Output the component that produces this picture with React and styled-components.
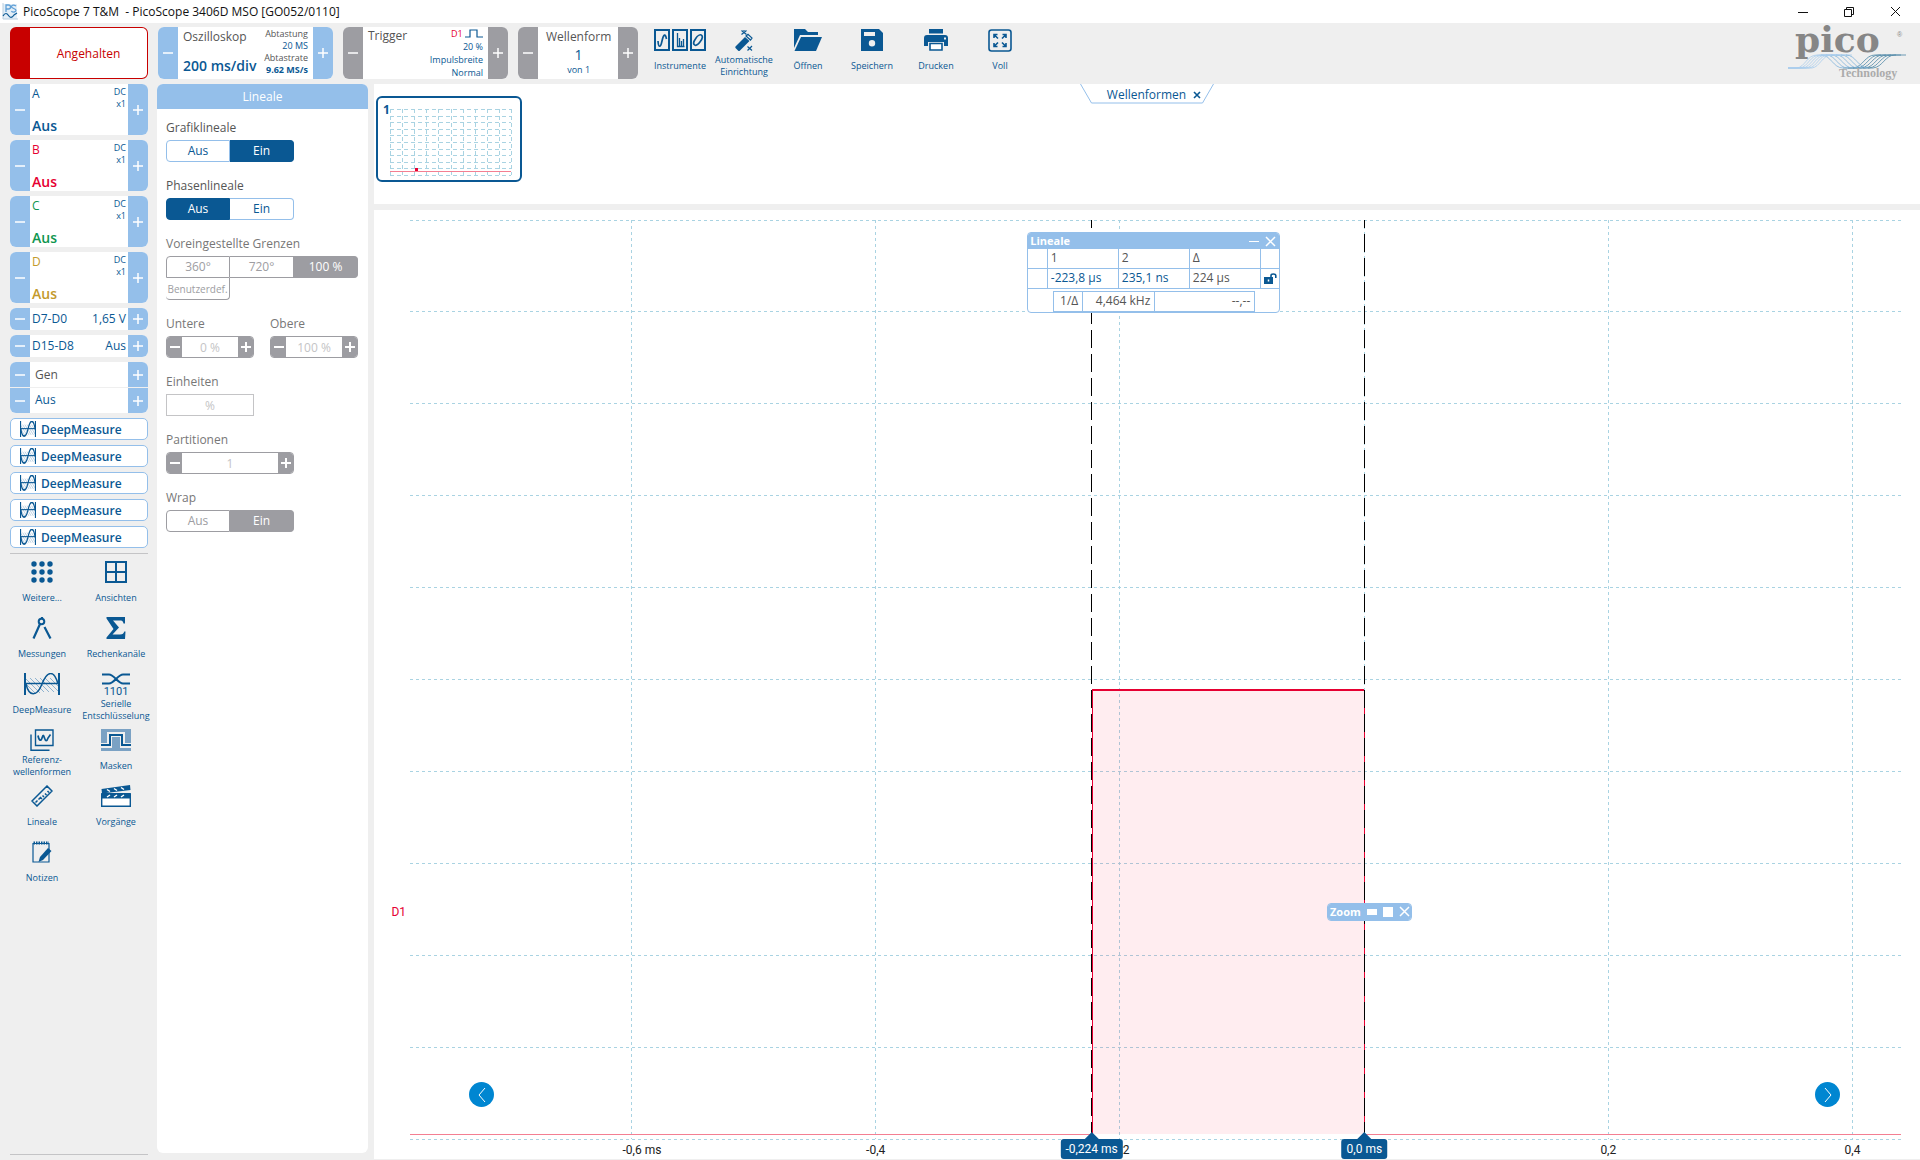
import React from "react";
import styled, { createGlobalStyle, css } from "styled-components";

const c = {
  navy: "#0a5893",
  sky: "#94bfea",
  grey: "#9d9da2",
  bg: "#efefef",
  text: "#555555",
  red: "#c80000",
  trace: "#e60032",
  grid: "#a9d3e2",
};

const Global = createGlobalStyle`
  *, *::before, *::after { box-sizing: border-box; }
  body { margin: 0; background: ${c.bg}; }
  body, button, input { font-family: "Open Sans", "Noto Sans", sans-serif; font-size: 12px; }
  button { padding: 0; border: 0; background: none; color: inherit; cursor: pointer; }
  svg { display: block; flex: none; }
`;

/* ---------- frame ---------- */

const Page = styled.div`
  display: flex;
  flex-direction: column;
  height: 100vh;
  color: ${c.navy};
`;

const TitleBar = styled.header`
  display: flex;
  align-items: center;
  height: 23px;
  flex: none;
  padding: 0 2px;
  background: #fff;
  color: #111;
`;

const Title = styled.h1`
  flex: 1;
  margin: 0 0 0 5px;
  font-size: 12px;
  font-weight: 400;
  line-height: 20px;
  white-space: pre;
`;

const WindowButton = styled.button`
  display: grid;
  place-items: center;
  width: 46px;
  height: 20px;
`;

const Toolbar = styled.div`
  display: flex;
  align-items: flex-start;
  gap: 10px;
  flex: none;
  height: 61px;
  padding: 4px 12px 0 10px;
`;

const Body = styled.main`
  display: flex;
  flex: 1;
  min-height: 0;
`;

/* ---------- stepper cards ---------- */

const Card = styled.div`
  display: flex;
  width: ${(p) => p.$w || "auto"};
  height: ${(p) => p.$h}px;
  flex: none;
  overflow: hidden;
  border-radius: 6px;
  background: #fff;
`;

const Step = styled.button`
  display: grid;
  place-items: center;
  width: 20px;
  flex: none;
  background: ${(p) => (p.$grey ? c.grey : c.sky)};
`;

const CardBody = styled.div`
  display: flex;
  flex: 1;
  justify-content: space-between;
  min-width: 0;
  padding: ${(p) => p.$pad || "0 2px"};
  white-space: nowrap;
`;

const Stack = styled.div`
  display: flex;
  flex-direction: column;
  justify-content: ${(p) => p.$justify || "flex-start"};
  align-items: ${(p) => p.$align || "flex-start"};
`;

const Caption = styled.span`
  color: ${(p) => p.$color || c.text};
  font-size: ${(p) => (p.$big ? 14 : 12)}px;
  line-height: 18px;
`;

const Strong = styled.span`
  color: ${(p) => p.$color || c.navy};
  font-size: 14px;
  font-weight: 600;
  line-height: 18px;
`;

const Small = styled.span`
  display: flex;
  align-items: center;
  color: ${(p) => p.$color || c.navy};
  font-size: 9px;
  font-weight: ${(p) => (p.$bold ? 700 : 400)};
  line-height: ${(p) => p.$lh || 12}px;
`;

const StopButton = styled.button`
  width: 138px;
  height: 52px;
  flex: none;
  border: 1px solid ${c.red};
  border-left-width: 20px;
  border-radius: 6px;
  background: #fff;
  color: ${c.red};
  font-size: 12px;
`;

/* ---------- tools ---------- */

const Tools = styled.nav`
  display: flex;
  flex: 1;
`;

const ToolButton = styled.button`
  display: flex;
  flex-direction: column;
  align-items: center;
  gap: 2px;
  width: ${(p) => p.$w}px;
  padding-top: 2px;
  color: ${c.navy};
`;

const ToolIcon = styled.span`
  display: grid;
  place-items: start center;
  height: 23px;
`;

const ToolLabel = styled.span`
  display: flex;
  flex-direction: column;
  justify-content: center;
  height: 24px;
  font-size: 9px;
  line-height: 12px;
  white-space: nowrap;
`;

const Sidebar = styled.aside`
  display: flex;
  flex-direction: column;
  gap: 5px;
  width: 157px;
  flex: none;
  padding-bottom: 5px;
`;

const Channels = styled.div`
  display: flex;
  flex-direction: column;
  gap: 5px;
  padding: 0 9px 0 10px;
`;

const Rule = styled.hr`
  width: 138px;
  margin: ${(p) => (p.$bottom ? "auto 0 0 10px" : "0 0 0 10px")};
  border: 0;
  border-top: 1px solid #c4c4c6;
`;

const GenCard = styled.div`
  display: flex;
  flex-direction: column;
  gap: 1px;
  height: 51px;
`;

const GenHalf = styled(Card)`
  flex: 1;
  height: auto;
  border-radius: ${(p) => (p.$top ? "6px 6px 0 0" : "0 0 6px 6px")};
`;

const DeepButton = styled.button`
  display: flex;
  align-items: center;
  gap: 5px;
  height: 22px;
  padding-left: 9px;
  border: 1px solid ${c.sky};
  border-radius: 5px;
  background: #fff;
  font-size: 12px;
  font-weight: 600;
`;

const ToolGrid = styled.nav`
  display: grid;
  grid-template-columns: 74px 74px;
  grid-auto-rows: 56px;
  padding-left: 5px;
`;

/* ---------- ruler settings ---------- */

const Panel = styled.section`
  display: flex;
  flex-direction: column;
  width: 211px;
  flex: none;
  margin: 0 6px 7px 0;
  overflow: hidden;
  border-radius: 6px;
  background: #fff;
`;

const PanelTitle = styled.h2`
  margin: 0;
  background: ${c.sky};
  color: #fff;
  font-size: 12px;
  font-weight: 400;
  line-height: 25px;
  text-align: center;
`;

const Fields = styled.div`
  display: flex;
  flex-direction: column;
  gap: 13px;
  padding: 8px 10px 0 9px;
`;

const Pair = styled.div`
  display: flex;
  gap: 16px;
`;

const Field = styled.div`
  display: flex;
  flex-direction: column;
  gap: 1px;
  color: ${(p) => (p.$off ? "#777777" : c.text)};
  font-size: 12px;
  line-height: 22px;
`;

const Segments = styled.div`
  display: flex;
  flex-wrap: wrap;
`;

const Segment = styled.button`
  width: 64px;
  height: 22px;
  border: 1px solid ${(p) => (p.$off ? c.grey : c.sky)};
  border-radius: ${(p) => p.$radius || "0"};
  background: ${(p) => (p.$on ? (p.$off ? c.grey : c.navy) : "#fff")};
  color: ${(p) => (p.$on ? "#fff" : p.$off ? c.grey : c.navy)};
  font-size: ${(p) => (p.$narrow ? 10 : 12)}px;
  line-height: 20px;
  white-space: nowrap;
  ${(p) => p.$on && !p.$off && css`border-color: ${c.navy};`}
  & + & { border-left-width: ${(p) => (p.$narrow ? 1 : 0)}px; }
  ${(p) => p.$narrow && css`border-top-width: 0;`}
`;

const Spinner = styled.div`
  display: flex;
  width: ${(p) => p.$w}px;
  height: 22px;
  overflow: hidden;
  border: 1px solid ${c.grey};
  border-radius: 4px;
`;

const SpinStep = styled(Step)`
  width: 15px;
`;

const SpinInput = styled.input`
  flex: 1;
  width: 0;
  padding: 0;
  border: 0;
  background: #fff;
  color: #c4c4c6;
  font-size: 12px;
  text-align: center;
`;

const UnitInput = styled.input`
  width: 88px;
  height: 22px;
  padding: 0;
  border: 1px solid #c4c4c6;
  background: #fff;
  color: #c4c4c6;
  text-align: center;
`;

/* ---------- waveform area ---------- */

const Views = styled.div`
  display: flex;
  flex: 1;
  flex-direction: column;
  gap: 6px;
  min-width: 0;
  padding-bottom: 1px;
`;

const Buffer = styled.section`
  display: grid;
  grid-template-columns: 1fr auto 1fr;
  align-items: start;
  height: 120px;
  flex: none;
  background: #fff;
`;

const Thumb = styled.button`
  display: flex;
  width: 146px;
  height: 86px;
  margin: 12px 0 0 2px;
  padding: 4px 0 0 5px;
  border: 2px solid ${c.navy};
  border-radius: 6px;
  color: ${c.navy};
  font-size: 12px;
  font-weight: 700;
  line-height: 16px;
`;

const ThumbPlot = styled.svg`
  margin: 7px 0 0;
`;

const TabShape = styled.svg`
  grid-area: 1 / 1;
`;

const Tab = styled.div`
  display: grid;
  width: 134px;
  height: 20px;
`;

const TabText = styled.div`
  display: flex;
  grid-area: 1 / 1;
  align-items: center;
  justify-content: center;
  gap: 7px;
  padding: 1px 0 0 14px;
  font-size: 12px;
  line-height: 20px;
`;

const Graph = styled.section`
  display: grid;
  position: relative;
  flex: 1;
  min-height: 0;
  padding: 10px 19px 20px 36px;
  background: #fff;
`;

const Plot = styled.div`
  position: relative;
  min-height: 0;
`;

const PlotSvg = styled.svg`
  position: absolute;
  width: 100%;
  height: 100%;
  overflow: visible;
  shape-rendering: crispEdges;
`;

const Tick = styled.text`
  fill: ${(p) => p.$color || "#222222"};
  font-family: Roboto, sans-serif;
  font-size: 12px;
  text-anchor: ${(p) => p.$anchor || "middle"};
`;

const Flag = styled.div`
  position: absolute;
  top: 100%;
  left: ${(p) => p.$left};
  transform: translateX(-50%);
  padding: 0 5px;
  border-radius: 3px;
  background: ${c.navy};
  color: #fff;
  font-family: Roboto, sans-serif;
  font-size: 12px;
  line-height: 20px;
  white-space: nowrap;
  &::before {
    content: "";
    position: absolute;
    bottom: 100%;
    left: 50%;
    margin-left: -7px;
    border: 7px solid transparent;
    border-top-width: 0;
    border-bottom-color: ${c.navy};
  }
`;

const PageButton = styled.button`
  display: grid;
  place-items: center;
  position: absolute;
  bottom: 52px;
  ${(p) => (p.$right ? "right: 80px;" : "left: 95px;")}
  width: 25px;
  height: 25px;
  border-radius: 50%;
  background: #0086d1;
`;

const Floating = styled.div`
  position: absolute;
  top: ${(p) => p.$top};
  left: ${(p) => p.$left};
  width: ${(p) => p.$w}px;
  overflow: hidden;
  border: 1px solid ${c.sky};
  border-radius: 4px;
  background: #fff;
`;

const FloatBar = styled.div`
  display: flex;
  align-items: center;
  gap: ${(p) => p.$gap}px;
  height: 16px;
  padding: 0 3px 0 2px;
  background: ${c.sky};
  color: #fff;
  font-size: 11px;
  font-weight: 700;
  line-height: 16px;
`;

const FloatTitle = styled.span`
  flex: 1;
`;

const RulerTable = styled.table`
  width: ${(p) => p.$w}px;
  margin: ${(p) => p.$margin || "0"};
  border-collapse: collapse;
  table-layout: fixed;
  color: ${c.text};
  font-size: 12px;
`;

const Cell = styled.td`
  width: ${(p) => p.$w}px;
  height: ${(p) => p.$h}px;
  padding: 0 ${(p) => (p.$end ? 4 : 3)}px;
  border: 1px solid ${c.sky};
  ${(p) => p.$open && css`border-top: 0;`}
  ${(p) => p.$first && css`border-left: 0;`}
  ${(p) => p.$last && css`border-right: 0;`}
  color: ${(p) => (p.$blue ? c.navy : c.text)};
  line-height: 16px;
  text-align: ${(p) => (p.$end ? "right" : "left")};
  white-space: nowrap;
`;

/* ---------- icons ---------- */

const Svg = ({ w, h, children, ...rest }) => (
  <svg width={w} height={h} viewBox={`0 0 ${w} ${h}`} fill="none" stroke="currentColor" aria-hidden="true" {...rest}>
    {children}
  </svg>
);

const Sign = ({ plus, thick }) => (
  <Svg w={10} h={10} stroke="#fff" strokeWidth={thick ? 2 : 1.5}>
    <path d={plus ? "M0 5H10M5 0V10" : "M0 5H10"} />
  </Svg>
);

const Cross = ({ size = 10, width = 1 }) => (
  <Svg w={size} h={size} strokeWidth={width}>
    <path d={`M1 1L${size - 1} ${size - 1}M${size - 1} 1L1 ${size - 1}`} />
  </Svg>
);

const AppIcon = () => (
  <Svg w={16} h={17}>
    <rect x="1" y="1" width="14" height="15" fill="#e3eef7" stroke="none" />
    <path d="M1 0V16H16" stroke="#b9cfe0" />
    <path d="M4 9V2H6.500A2 2 0 0 1 6.500 6H4M14 3C12 1.500 9.500 2 9.500 3.800S14 5.400 14 7.300S11 9.600 9.300 8.200" stroke="#5f9fd6" strokeWidth="1.300" />
    <path d="M1 13C3 9.500 5 10 6.500 12.500S10 15 12 12L15 10" stroke={c.navy} strokeWidth="1.200" />
  </Svg>
);

const Instruments = () => (
  <Svg w={52} h={22} strokeWidth="2">
    <rect x="1" y="1" width="14" height="20" />
    <rect x="19" y="1" width="14" height="20" />
    <rect x="37" y="1" width="14" height="20" />
    <path d="M4 12C4.500 19 6.500 19 8 12S11.500 4 12.500 10" strokeWidth="1.700" />
    <path d="M23.500 4V17.500H30.500M25.500 9V17M27.500 12V17M29.500 10V17" strokeWidth="1.300" />
    <ellipse cx="44" cy="11" rx="2.800" ry="6" transform="rotate(35 44 11)" strokeWidth="1.700" />
  </Svg>
);

const Wand = () => (
  <Svg w={20} h={23}>
    <path d="M1.500 17.500L11 8L15.500 12L6 21.500Q5 22.500 4 21.500L1.500 19Q1 18 1.500 17.500Z" fill="currentColor" stroke="none" />
    <path d="M12 7L14 5.300L18 9L16.500 11Z" strokeWidth="1.200" />
    <path d="M7.500 1.500L12.500 5.500M12.500 1.500L7.500 5.500M10 1V2M13.500 17.500L18 21.500M18 17L13.500 21.500" strokeWidth="1.200" />
  </Svg>
);

const Folder = () => (
  <Svg w={28} h={22} fill="currentColor" stroke="none">
    <path d="M0 0H11L14 3H24V6H6L0 19Z" />
    <path d="M7 8H28L22 22H0.500Z" />
  </Svg>
);

const Disk = () => (
  <Svg w={22} h={22} fill="currentColor" stroke="none">
    <path fillRule="evenodd" d="M0 0H18L22 4V22H0ZM3 3V7H14V3ZM11 11A3.200 3.200 0 1 0 11 17.400A3.200 3.200 0 1 0 11 11Z" />
  </Svg>
);

const Printer = () => (
  <Svg w={24} h={22} fill="currentColor" stroke="none">
    <path d="M5 0H19V4.500H5Z" />
    <path fillRule="evenodd" d="M3 6H21Q24 6 24 9V17H20V13H4V17H0V9Q0 6 3 6ZM20 8.500V10.500H22V8.500Z" />
    <path d="M6 14.500H18V21H6Z" fill="#fff" stroke={c.navy} strokeWidth="1.600" />
  </Svg>
);

const Full = () => (
  <Svg w={24} h={23} strokeWidth="1.600">
    <rect x="1" y="1" width="22" height="21" rx="2.500" />
    <path d="M6 9V5.500H9.500M6.500 6L10 9.500M14.500 5.500H18V9M17.500 6L14 9.500M6 14V17.500H9.500M6.500 17L10 13.500M14.500 17.500H18V14M17.500 17L14 13.500" />
  </Svg>
);

const Dots = () => (
  <Svg w={22} h={22} fill="currentColor" stroke="none">
    {[3, 11, 19].map((y) => [3, 11, 19].map((x) => <circle key={x + "-" + y} cx={x} cy={y} r="2.700" />))}
  </Svg>
);

const Panes = () => (
  <Svg w={22} h={22} strokeWidth="2">
    <path d="M1 1H21V21H1ZM11 1V21M1 11H21" />
  </Svg>
);

const Compass = () => (
  <Svg w={20} h={22} strokeWidth="2.200">
    <circle cx="9.500" cy="4.500" r="2.800" strokeWidth="2" />
    <path d="M10 0V2M8 7L1.500 21.500M12.500 10L18.500 21.500" />
  </Svg>
);

const Sigma = () => (
  <Svg w={20} h={22} fill="currentColor" stroke="none">
    <path d="M0.500 0H19V6.500H17.500C17 4 16 3.500 13.500 3.500H7L13 10.500L6.500 17.500H14C17 17.500 17.500 16.500 18.300 14.500H19.500L19 22H0.500V20.500L7.500 12L0.500 1.500Z" />
  </Svg>
);

const Deep = ({ small }) => (
  <svg width={small ? 16 : 36} height={small ? 16 : 22} viewBox="0 0 36 22" preserveAspectRatio="none" fill="none" stroke={c.navy} aria-hidden="true">
    <path d="M2 6L16 20M2 11L12 21M6 5L20 19M11 5L25 19M16 5L30 19M21 5L34 18M26 5L34 13" stroke="#8fb3d0" strokeWidth="1" />
    <path d="M1 0V22M35 0V22" strokeWidth={small ? 3 : 2} />
    <path d="M1 10.500H35" strokeWidth="1.500" />
    <path d="M2 11C5 24 13 24 18 11S30 -4 34 11" strokeWidth={small ? 2.5 : 1.5} />
  </svg>
);

const Serial = () => (
  <Svg w={28} h={23}>
    <path d="M0 1.500H7C12 1.500 16 10.500 21 10.500H28M0 10.500H7C12 10.500 16 1.500 21 1.500H28" strokeWidth="2" />
    <text x="14" y="22" fontSize="11" fontFamily="Roboto, sans-serif" textAnchor="middle" fill={c.navy} stroke="none">1101</text>
  </Svg>
);

const Reference = () => (
  <Svg w={24} h={22} strokeWidth="1.400">
    <path d="M5.500 1H23V16.500H5.500ZM1 5.500V21.300H19.500" />
    <path d="M8 6.500C9 12 11 12.500 12 9S13.500 5.500 14.500 9S17 12.500 18 9L20.500 5.500" strokeWidth="1.700" />
  </Svg>
);

const Mask = () => (
  <Svg w={30} h={22}>
    <path d="M0 0H30V22H0Z" fill="#7ba2c4" stroke="none" />
    <path d="M0 16.500H8.500V5.500H21.500V16.500H30" stroke={c.bg} strokeWidth="5" />
    <path d="M0 16H9V6H21V16H30" strokeWidth="2" />
  </Svg>
);

const Ruler = () => (
  <Svg w={22} h={22} strokeWidth="1.500">
    <path d="M1 16L16 1L21 6L6 21ZM4.500 17.500L6.500 15.500M7.500 14.500L9.500 12.500L11 14M11.500 10.500L13 12M14 8.500L15.500 10M16.500 6L18 7.500" />
  </Svg>
);

const Clapper = () => (
  <Svg w={30} h={22}>
    <path d="M0.500 4L29 0L29.500 5L1 8.500Z" fill="currentColor" stroke="none" />
    <path d="M0.700 9H29.300V21.300H0.700Z" fill="#fff" strokeWidth="1.400" />
    <path d="M0.500 8H29.500V13.500H0.500Z" fill="currentColor" stroke="none" />
    <path d="M6 4.500L9 6.500M13 3.500L16 5.500M20 2.500L23 4.500M6 12L9 10M13 12L16 10M20 12L23 10" stroke="#fff" strokeWidth="1.500" />
  </Svg>
);

const Notes = () => (
  <Svg w={20} h={22}>
    <path d="M1 2.500H17V21H1Z" strokeWidth="1.200" />
    <path d="M1.500 2H17" strokeWidth="3" strokeDasharray="1.500 1" />
    <path d="M8 16L16 7L19.500 10L11 19L6.500 21Z" fill="currentColor" stroke="none" />
  </Svg>
);

const PulseIcon = () => (
  <Svg w={18} h={9} stroke={c.navy} strokeWidth="1.200">
    <path d="M0 8H5V1H12V8H18" />
  </Svg>
);

const Lock = () => (
  <Svg w={13} h={11}>
    <path d="M0 4H9V11H0Z" fill="currentColor" stroke="none" />
    <path d="M7 4V2.500Q7 1 9.300 1T11.800 2.500V5" strokeWidth="1.600" />
    <path d="M4.500 6.500V8.500" stroke="#fff" strokeWidth="1.500" />
  </Svg>
);

const LogoArt = styled.svg`
  margin-top: -4px;
  overflow: visible;
`;

const Logo = () => (
  <LogoArt width="121" height="60" viewBox="0 0 121 60" role="img" aria-label="pico Technology">
    <g fill="none" strokeWidth="0.800" transform="translate(0 4)">
      {[0, 1, 2, 3, 4, 5].map((i) => (
        <g key={i}>
          <path d={`M1 41H${10 + i * 3}C${18 + i * 3} 40 ${20 + i * 3} 28 ${30 + i * 3} 28H${40 + i * 5}`} stroke="#a9cdec" />
          <path d={`M${34 + i * 5} 28C${44 + i * 5} 28 ${46 + i * 5} 41 ${56 + i * 5} 41`} stroke="#7fb2da" />
          <path d={`M${56 + i * 5} 41H${66 + i * 4}C${76 + i * 4} 40 ${78 + i * 4} 28 ${88 + i * 4} 28H${94 + i * 5}`} stroke="#4d86a6" />
        </g>
      ))}
    </g>
    <text x="8" y="29" fontFamily="DejaVu Serif, serif" fontSize="36" fontWeight="700" fill="#868686">pico</text>
    <text x="110" y="14" fontFamily="Liberation Sans, sans-serif" fontSize="7" fill="#868686">®</text>
    <text x="52" y="54" fontFamily="Liberation Serif, serif" fontSize="12" fontWeight="700" fill="#ababab">Technology</text>
  </LogoArt>
);

/* ---------- data ---------- */

const tools = [
  ["Instrumente", Instruments],
  ["Automatische\nEinrichtung", Wand],
  ["Öffnen", Folder],
  ["Speichern", Disk],
  ["Drucken", Printer],
  ["Voll", Full],
];

const sideTools = [
  ["Weitere...", Dots],
  ["Ansichten", Panes],
  ["Messungen", Compass],
  ["Rechenkanäle", Sigma],
  ["DeepMeasure", Deep],
  ["Serielle\nEntschlüsselung", Serial],
  ["Referenz-\nwellenformen", Reference],
  ["Masken", Mask],
  ["Lineale", Ruler],
  ["Vorgänge", Clapper],
  ["Notizen", Notes],
];

const channels = [
  ["A", c.navy],
  ["B", c.trace],
  ["C", "#109650"],
  ["D", "#c49a2c"],
];

/* Time axis in milliseconds, mapped to a share of the plot width. */
const T_MIN = -0.7814;
const T_MAX = 0.4397;
const at = (t) => `${((t - T_MIN) / (T_MAX - T_MIN)) * 100}%`;
const ticks = [-0.6, -0.4, -0.2, 0, 0.2, 0.4];
const HIGH = "51.1%";
const LOW = "99.5%";
const RULER_1 = -0.2232;
const RULER_2 = 0.0002;

/* ---------- pieces ---------- */

function Stepper({ name, w, h, grey, pad, children }) {
  return (
    <Card $w={w} $h={h}>
      <Step $grey={grey} aria-label={`${name} verringern`}><Sign /></Step>
      <CardBody $pad={pad}>{children}</CardBody>
      <Step $grey={grey} aria-label={`${name} erhöhen`}><Sign plus /></Step>
    </Card>
  );
}

function Tool({ label, Icon, w }) {
  return (
    <ToolButton $w={w}>
      <ToolIcon><Icon /></ToolIcon>
      <ToolLabel>
        {label.split("\n").map((line) => <span key={line}>{line}</span>)}
      </ToolLabel>
    </ToolButton>
  );
}

function Toggle({ label, value, off, dim }) {
  return (
    <Field $off={dim} role="group" aria-label={label}>
      <span>{label}</span>
      <Segments>
        <Segment $on={value === "Aus"} $off={off} $radius="4px 0 0 4px" aria-pressed={value === "Aus"} disabled={off}>Aus</Segment>
        <Segment $on={value === "Ein"} $off={off} $radius="0 4px 4px 0" aria-pressed={value === "Ein"} disabled={off}>Ein</Segment>
      </Segments>
    </Field>
  );
}

function NumberField({ id, label, value, w }) {
  return (
    <Field $off>
      <label htmlFor={id}>{label}</label>
      <Spinner $w={w}>
        <SpinStep $grey disabled aria-label={`${label} verringern`}><Sign thick /></SpinStep>
        <SpinInput id={id} defaultValue={value} disabled />
        <SpinStep $grey disabled aria-label={`${label} erhöhen`}><Sign plus thick /></SpinStep>
      </Spinner>
    </Field>
  );
}

function Waveform() {
  const ys = Array.from({ length: 11 }, (_, i) => `${i * 10}%`);
  return (
    <Graph>
      <Plot>
        <PlotSvg>
          <g stroke={c.grid} strokeDasharray="3 3">
            {ys.map((y) => <line key={y} x1="0" x2="100%" y1={y} y2={y} />)}
            {ticks.map((t) => <line key={t} x1={at(t)} x2={at(t)} y1="0" y2="100%" />)}
          </g>
          <rect x={at(RULER_1)} y={HIGH} width={`${((RULER_2 - RULER_1) / (T_MAX - T_MIN)) * 100}%`} height="48.4%" fill="#ff1e46" fillOpacity="0.08" />
          <line x1="0" x2={at(RULER_1)} y1={LOW} y2={LOW} stroke="#f47f92" />
          <line x1={at(RULER_2)} x2="100%" y1={LOW} y2={LOW} stroke="#f47f92" />
          <g stroke={c.trace}>
            <line x1={at(RULER_1 + 0.0008)} x2={at(RULER_1 + 0.0008)} y1={HIGH} y2={LOW} />
            <line x1={at(RULER_1)} x2={at(RULER_2)} y1={HIGH} y2={HIGH} strokeWidth="2" />
            <line x1={at(RULER_2)} x2={at(RULER_2)} y1={HIGH} y2={LOW} />
          </g>
          <g stroke="#000" strokeDasharray="18 6" strokeDashoffset="10">
            <line x1={at(RULER_1)} x2={at(RULER_1)} y1="0" y2="99.5%" />
            <line x1={at(RULER_2)} x2={at(RULER_2)} y1="0" y2="99.5%" />
          </g>
          <Tick x="-4" y="75.3%" dy="4" $anchor="end" $color={c.trace}>D1</Tick>
          {ticks.filter((t) => t !== 0).map((t) => (
            <Tick key={t} x={at(t)} y="100%" dx={t === -0.6 ? -9 : 0} dy="15" $anchor={t === -0.6 ? "start" : "middle"}>
              {String(t).replace(".", ",") + (t === -0.6 ? " ms" : "")}
            </Tick>
          ))}
        </PlotSvg>
        <Flag $left={at(RULER_1)}>-0,224 ms</Flag>
        <Flag $left={at(RULER_2)}>0,0 ms</Flag>

        <Floating $top="12px" $left="41.4%" $w={253}>
          <FloatBar $gap={6}>
            <FloatTitle>Lineale</FloatTitle>
            <button aria-label="Minimieren"><Svg w={10} h={10}><path d="M0 5.500H10" /></Svg></button>
            <button aria-label="Schließen"><Cross size={11} width={1.5} /></button>
          </FloatBar>
          <RulerTable $w={251}>
            <tbody>
              <tr>
                <Cell $w={19} $h={19} $first $open />
                <Cell $w={71} $open>1</Cell>
                <Cell $w={71} $open>2</Cell>
                <Cell $w={71} $open>Δ</Cell>
                <Cell $w={19} $open $last />
              </tr>
              <tr>
                <Cell $h={20} $first />
                <Cell $blue>-223,8 µs</Cell>
                <Cell $blue>235,1 ns</Cell>
                <Cell>224 µs</Cell>
                <Cell $last $blue><Lock /></Cell>
              </tr>
            </tbody>
          </RulerTable>
          <RulerTable $w={201} $margin="2px 0 0 25px">
            <tbody>
              <tr>
                <Cell $w={29} $h={20} $end>1/Δ</Cell>
                <Cell $w={72} $end>4,464 kHz</Cell>
                <Cell $w={100} $end>--,--</Cell>
              </tr>
            </tbody>
          </RulerTable>
        </Floating>

        <Floating $top="74.3%" $left="61.5%" $w={85}>
          <FloatBar $gap={6}>
            <FloatTitle>Zoom</FloatTitle>
            <button aria-label="Verkleinern"><Svg w={10} h={6} fill="#fff" stroke="none"><path d="M0 0H10V6H0Z" /></Svg></button>
            <button aria-label="Vergrößern"><Svg w={10} h={10} fill="#fff" stroke="none"><path d="M0 0H10V10H0Z" /></Svg></button>
            <button aria-label="Zoom schließen"><Cross size={11} width={1.5} /></button>
          </FloatBar>
        </Floating>
      </Plot>
      <PageButton aria-label="Zurück"><Svg w={8} h={16} stroke="#fff"><path d="M7 1L1 8L7 15" /></Svg></PageButton>
      <PageButton $right aria-label="Weiter"><Svg w={8} h={16} stroke="#fff"><path d="M1 1L7 8L1 15" /></Svg></PageButton>
    </Graph>
  );
}

export default function App() {
  const thumbLines = Array.from({ length: 11 }, (_, i) => i);
  return (
    <Page>
      <Global />
      <TitleBar>
        <AppIcon />
        <Title>{"PicoScope 7 T&M  - PicoScope 3406D MSO [GO052/0110]"}</Title>
        <WindowButton aria-label="Minimieren"><Svg w={10} h={10}><path d="M0 5.500H10" /></Svg></WindowButton>
        <WindowButton aria-label="Wiederherstellen">
          <Svg w={10} h={10}><path d="M0.500 2.500H7.500V9.500H0.500ZM2.500 2.500V0.500H9.500V7.500H7.500" /></Svg>
        </WindowButton>
        <WindowButton aria-label="Schließen"><Cross size={11} /></WindowButton>
      </TitleBar>

      <Toolbar>
        <StopButton>Angehalten</StopButton>
        <Stepper name="Zeitbasis" w="175px" h={52} pad="1px 5px 4px">
          <Stack $justify="space-between">
            <Caption>Oszilloskop</Caption>
            <Strong>200 ms/div</Strong>
          </Stack>
          <Stack $align="flex-end">
            <Small $color={c.text}>Abtastung</Small>
            <Small>20 MS</Small>
            <Small $color={c.text}>Abtastrate</Small>
            <Small $bold>9.62 MS/s</Small>
          </Stack>
        </Stepper>
        <Stepper name="Trigger" w="165px" h={52} grey pad="0 5px">
          <Caption>Trigger</Caption>
          <Stack $align="flex-end">
            <Small $lh={13} $color={c.trace}>D1&nbsp;<PulseIcon /></Small>
            <Small $lh={13}>20 %</Small>
            <Small $lh={13}>Impulsbreite</Small>
            <Small $lh={13}>Normal</Small>
          </Stack>
        </Stepper>
        <Stepper name="Wellenform" w="120px" h={52} grey pad="1px 0 0 8px">
          <Stack $align="center">
            <Caption>Wellenform</Caption>
            <Caption $big $color={c.navy}>1</Caption>
            <Small>von 1</Small>
          </Stack>
        </Stepper>
        <Tools>
          {tools.map(([label, Icon]) => <Tool key={label} label={label} Icon={Icon} w={64} />)}
        </Tools>
        <Logo />
      </Toolbar>

      <Body>
        <Sidebar>
          <Channels>
            {channels.map(([name, color]) => (
              <Stepper key={name} name={`Kanal ${name}`} h={51} pad="1px 2px 0">
                <Stack $justify="space-between">
                  <Caption $color={color}>{name}</Caption>
                  <Strong $color={color}>Aus</Strong>
                </Stack>
                <Stack $align="flex-end">
                  <Small $lh={13}>DC</Small>
                  <Small>x1</Small>
                </Stack>
              </Stepper>
            ))}
            {[["D7-D0", "1,65 V"], ["D15-D8", "Aus"]].map(([name, value]) => (
              <Stepper key={name} name={name} h={22} pad="2px 2px 0">
                <Caption $color={c.navy}>{name}</Caption>
                <Caption $color={c.navy}>{value}</Caption>
              </Stepper>
            ))}
            <GenCard>
              <GenHalf $top>
                <Step aria-label="Generator verringern"><Sign /></Step>
                <CardBody $pad="4px 5px 0"><Caption>Gen</Caption></CardBody>
                <Step aria-label="Generator erhöhen"><Sign plus /></Step>
              </GenHalf>
              <GenHalf>
                <Step aria-label="Ausgang verringern"><Sign /></Step>
                <CardBody $pad="3px 5px 0"><Caption $color={c.navy}>Aus</Caption></CardBody>
                <Step aria-label="Ausgang erhöhen"><Sign plus /></Step>
              </GenHalf>
            </GenCard>
            {[1, 2, 3, 4, 5].map((n) => (
              <DeepButton key={n}><Deep small />DeepMeasure</DeepButton>
            ))}
          </Channels>
          <Rule />
          <ToolGrid>
            {sideTools.map(([label, Icon]) => <Tool key={label} label={label} Icon={Icon} w={74} />)}
          </ToolGrid>
          <Rule $bottom />
        </Sidebar>

        <Panel>
          <PanelTitle>Lineale</PanelTitle>
          <Fields>
            <Toggle label="Grafiklineale" value="Ein" />
            <Toggle label="Phasenlineale" value="Aus" />
            <Field $off role="group" aria-label="Voreingestellte Grenzen">
              <span>Voreingestellte Grenzen</span>
              <Segments>
                <Segment $off disabled $radius="4px 0 0 0">360°</Segment>
                <Segment $off disabled>720°</Segment>
                <Segment $off disabled $on $radius="0 4px 4px 0">100 %</Segment>
                <Segment $off disabled $narrow $radius="0 0 4px 4px">Benutzerdef.</Segment>
              </Segments>
            </Field>
            <Pair>
              <NumberField id="lower" label="Untere" value="0 %" w={88} />
              <NumberField id="upper" label="Obere" value="100 %" w={88} />
            </Pair>
            <Field $off>
              <label htmlFor="unit">Einheiten</label>
              <UnitInput id="unit" defaultValue="%" disabled />
            </Field>
            <NumberField id="parts" label="Partitionen" value="1" w={128} />
            <Toggle label="Wrap" value="Ein" off dim />
          </Fields>
        </Panel>

        <Views>
          <Buffer>
            <Thumb aria-label="Wellenform 1">
              1
              <ThumbPlot width="122" height="68" viewBox="0 0 122 68" shapeRendering="crispEdges">
                <g stroke={c.grid} strokeDasharray="4 3">
                  {thumbLines.map((i) => <path key={"h" + i} d={`M0 ${0.5 + Math.round(i * 6.6)}H121`} />)}
                  {thumbLines.map((i) => <path key={"v" + i} d={`M${0.5 + Math.round(i * 12.1)} 0V66`} />)}
                </g>
                <path d="M0 62.500H121" stroke="#f47f92" />
                <path d="M25 59H28V62H25Z" fill={c.trace} />
              </ThumbPlot>
            </Thumb>
            <Tab>
              <TabShape width="134" height="20" fill="none" stroke={c.sky}>
                <path d="M0.500 0L11.500 19H122.500L133.500 0" />
              </TabShape>
              <TabText>
                Wellenformen
                <button aria-label="Wellenformen schließen"><Cross size={8} width={1.6} /></button>
              </TabText>
            </Tab>
          </Buffer>
          <Waveform />
        </Views>
      </Body>
    </Page>
  );
}
